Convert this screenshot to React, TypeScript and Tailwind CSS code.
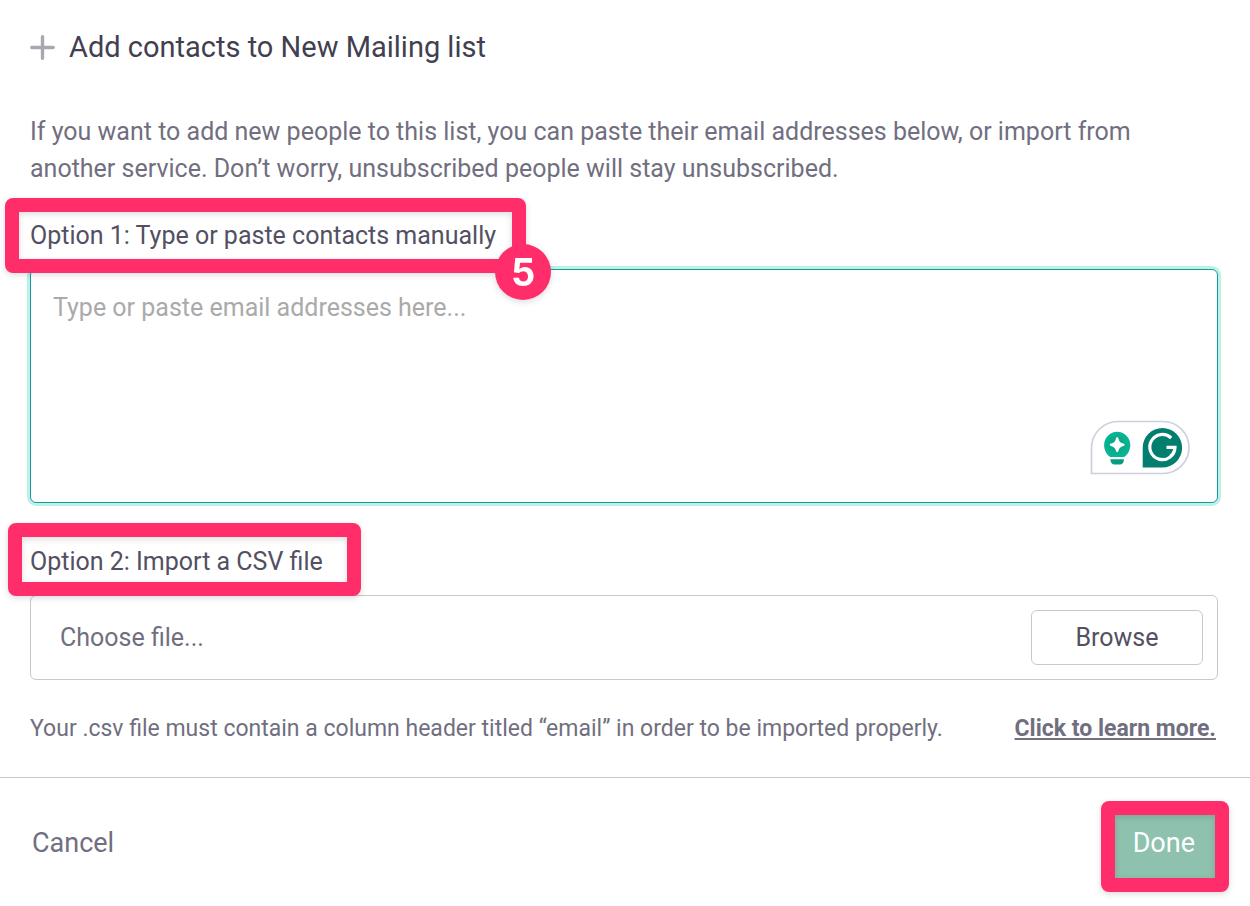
import React from "react";

function Highlight({ className, children }: { className: string; children?: React.ReactNode }) {
  return (
    <span
      className={`pointer-events-none absolute z-10 rounded-lg border-14 border-[#ff2e6b] drop-shadow-[0_2px_3px_rgba(0,0,0,0.14)] ${className}`}
    >
      {children}
    </span>
  );
}

function PlusIcon() {
  return (
    <svg className="size-[25px]" viewBox="0 0 25 25" aria-hidden="true">
      <path d="M12.5 1.8v21.4M1.8 12.5h21.4" stroke="#a9a8b0" strokeWidth="3.4" strokeLinecap="round" />
    </svg>
  );
}

function AssistantBadge() {
  return (
    <svg className="pointer-events-none absolute right-7 bottom-7 h-[55px] w-25" viewBox="0 0 100 55" aria-hidden="true">
      <defs>
        <radialGradient id="bulb" cx="50%" cy="50%" r="50%">
          <stop offset="0" stopColor="#0a9f80" />
          <stop offset="1" stopColor="#06b695" />
        </radialGradient>
      </defs>
      <path d="M1.5 53.5V28A26.5 26.5 0 0 1 28 1.5H73A26 26 0 0 1 73 53.5Z" fill="#fff" stroke="#cfd0de" strokeWidth="1.7" />
      <path
        d="M27.2 11.800a13.100 13.100 0 0 1 13.100 13.100c0 5.200-2.700 9.800-6.300 12.200H20.400c-3.600-2.400-6.300-7-6.300-12.200a13.100 13.100 0 0 1 13.100-13.100Z"
        fill="url(#bulb)"
      />
      <path d="M20.400 39.200h13.600c0 3.200-1.600 5.300-4.200 5.300h-5.200c-2.600 0-4.200-2.100-4.200-5.300Z" fill="#079b80" />
      <path
        d="M27.2 17.200c.7 0 1 .5 1.200 1.200.8 3 2.100 4.300 5 5.100.7.200 1.200.5 1.200 1.200s-.5 1-1.200 1.200c-2.900.8-4.200 2.100-5 5-.2.700-.5 1.200-1.200 1.200s-1-.5-1.200-1.200c-.8-2.900-2.100-4.200-5-5-.7-.2-1.200-.5-1.200-1.200s.5-1 1.200-1.200c2.900-.8 4.200-2.100 5-5.100.2-.7.500-1.200 1.200-1.200Z"
        fill="#fff"
      />
      <path d="M52.700 47.500V27.800a19.700 19.700 0 1 1 19.700 19.700Z" fill="#027e6f" />
      <path
        d="M81.200 18A12.600 12.600 0 1 0 85 27.400H76.500M84.800 27.400C84.800 32 82.500 34.500 80.400 36.400"
        fill="none"
        stroke="#fff"
        strokeWidth="3.2"
      />
    </svg>
  );
}

export default function App() {
  return (
    <main className="min-h-screen bg-white font-['Roboto','Liberation_Sans',sans-serif] text-[25px] leading-[37px] text-[#716f7f]">
      <section className="pr-8 pl-[30px]">
        <header className="flex items-center gap-[14px] pt-[29px]">
          <PlusIcon />
          <h1 className="text-[29px] text-[#413f50]">Add contacts to New Mailing list</h1>
        </header>

        <p className="pt-[47px]">
          If you want to add new people to this list, you can paste their email addresses below, or import from another
          service. Don’t worry, unsubscribed people will stay unsubscribed.
        </p>

        <div className="relative mt-[30px] w-fit text-[#525062]">
          <label htmlFor="emails">Option 1: Type or paste contacts manually</label>
          <Highlight className="-top-[19px] -right-[30px] -bottom-[19px] -left-[25px]">
            <span className="absolute -right-[39px] -bottom-[41px] flex size-14 items-center justify-center rounded-full bg-[#ff2e6b] font-['Inter','Liberation_Sans',sans-serif] text-[38px] font-bold text-white">
              5
            </span>
          </Highlight>
        </div>

        <div className="relative mt-[15px]">
          <textarea
            id="emails"
            autoComplete="off"
            placeholder="Type or paste email addresses here..."
            className="block h-[234px] w-full resize-none rounded-md border border-[#159aa5] bg-white px-[22px] py-[19px] ring-3 ring-[#b9f3e6] outline-none placeholder:text-[#aaaaaa]"
          />
          <AssistantBadge />
        </div>

        <div className="relative mt-10 w-fit text-[#525062]">
          <label htmlFor="browse">Option 2: Import a CSV file</label>
          <Highlight className="-top-5 -right-[38px] -bottom-4 -left-[22px]" />
        </div>

        <div className="mt-[15px] flex items-center justify-between rounded-md border border-[#c9c9c9] py-[14px] pr-[14px] pl-[29px]">
          <span>Choose file...</span>
          <button
            id="browse"
            type="button"
            className="w-43 rounded-md border border-[#c9c9c9] bg-white py-2 text-[#525062]"
          >
            Browse
          </button>
        </div>

        <div className="flex justify-between pt-[31px] pr-0.5 text-[23px] leading-9">
          <p>Your .csv file must contain a column header titled “email” in order to be imported properly.</p>
          <a href="#learn" className="font-bold underline">
            Click to learn more.
          </a>
        </div>
      </section>

      <footer className="mt-[30px] flex items-center justify-between border-t border-[#c9c9c9] py-[37px] pr-[35px] pl-8 text-[27px]">
        <button type="button" className="pt-[10px] pb-4">
          Cancel
        </button>
        <div className="relative">
          <button type="button" className="block bg-[#8ec2ae] pt-[10px] pr-5 pb-4 pl-[18px] text-white">
            Done
          </button>
          <Highlight className="-inset-[14px]" />
        </div>
      </footer>
    </main>
  );
}
